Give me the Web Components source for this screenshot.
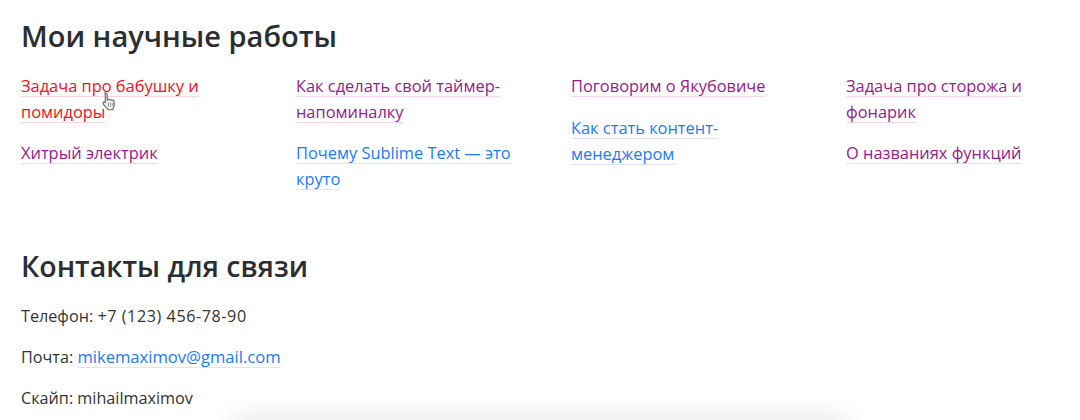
<!DOCTYPE html>
<html><head><meta charset="utf-8">
<style>
html,body{margin:0;padding:0;background:#fff;height:420px;overflow:hidden}
body{font-family:"Open Sans","Noto Sans",sans-serif;color:#24292e}
</style></head><body>
<template id="t-page"><style>
:host{display:block;padding:17px 21px 0;height:403px;box-sizing:content-box;position:relative;overflow:hidden;font-size:16.4px;line-height:26px}
</style><slot></slot><slot name="overlay"></slot></template>
<template id="t-h"><style>
:host{display:block;font-size:29px;line-height:38px;font-weight:600;color:#2a2e33}
:host([narrow]){font-size:28.5px}
</style><slot></slot></template>
<template id="t-grid"><style>
:host{display:grid;grid-template-columns:repeat(4,240px);column-gap:35px;margin-top:18px;align-items:start}
</style><slot></slot></template>
<template id="t-col"><style>
:host{display:flex;flex-direction:column;gap:15px}
:host([loose]){gap:16px}
</style><slot></slot></template>
<template id="t-link"><style>
:host{display:block}
:host([inline]){display:inline;font-size:16.6px}
a{color:#1a7bff;text-decoration:underline 1px #d9e8ff;text-underline-offset:4px;text-decoration-skip-ink:none}
:host([state=visited]) a{color:#981a8c;text-decoration-color:#f8d8f4}
:host([state=hover]) a{color:#f5111f;text-decoration-color:#fdd6d8}
</style><a href="#" onclick="return false"><slot></slot></a></template>
<template id="t-line"><style>
:host{display:block;height:26px;margin-bottom:15px;color:#333;font-size:16.2px}
</style><slot></slot></template>
<template id="t-cursor"><style>
:host{position:absolute;left:100px;top:90px;width:18px;height:23px;display:block}
svg{display:block}
</style><svg width="18" height="23" viewBox="0 0 16 20"><path d="M5 2.200c.9 0 1.400.6 1.400 1.400v5.200l.4-.5c.8-.4 1.500-.2 1.900.4.700-.5 1.500-.3 1.900.4.700-.4 1.500-.3 1.900.4.100.9.100 2.400.100 3.900 0 1.700-.7 3-1.400 3.900H7.200c-.9-1.200-2.500-2.800-3.900-4.600-.6-.8-.9-1.500-.5-2 .5-.5 1.200-.4 1.900.3V3.600C3.700 2.800 4.200 2.200 5 2.200z" fill="#f4f4f4" stroke="#666b6f" stroke-width="1" stroke-linejoin="round"/><path d="M7.500 11v3.500M9.500 11v3.500M11.500 11v3.500" stroke="#777c80" stroke-width=".8" fill="none"/></svg></template>
<template id="t-shadow"><style>
:host{position:absolute;left:230px;right:230px;bottom:-30px;height:30px;display:block;box-shadow:0 -4px 26px rgba(0,0,0,.09);border-radius:8px}
</style></template>
<my-page>
<my-h>Мои научные работы</my-h>
<my-grid>
<my-col><my-link state="hover">Задача про бабушку и помидоры</my-link><my-link state="visited">Хитрый электрик</my-link></my-col>
<my-col><my-link state="visited">Как сделать свой таймер-напоминалку</my-link><my-link>Почему Sublime Text — это круто</my-link></my-col>
<my-col loose><my-link state="visited">Поговорим о Якубовиче</my-link><my-link>Как стать контент-менеджером</my-link></my-col>
<my-col><my-link state="visited">Задача про сторожа и фонарик</my-link><my-link state="visited">О названиях функций</my-link></my-col>
</my-grid>
<my-h narrow style="margin-top:55px">Контакты для связи</my-h>
<div style="margin-top:18px">
<my-line>Телефон: <span style="letter-spacing:.55px">+7 (123) 456-78-90</span></my-line>
<my-line>Почта: <my-link inline>mikemaximov@gmail.com</my-link></my-line>
<my-line>Скайп: mihailmaximov</my-line>
</div>
<my-cursor slot="overlay"></my-cursor>
<my-shadow slot="overlay"></my-shadow>
</my-page>
<script>
for(const [n,id] of [['my-page','t-page'],['my-h','t-h'],['my-grid','t-grid'],['my-col','t-col'],['my-link','t-link'],['my-line','t-line'],['my-cursor','t-cursor'],['my-shadow','t-shadow']]){
customElements.define(n,class extends HTMLElement{constructor(){super();this.attachShadow({mode:'open'}).append(document.getElementById(id).content.cloneNode(true));}});
}
</script>
</body></html>
